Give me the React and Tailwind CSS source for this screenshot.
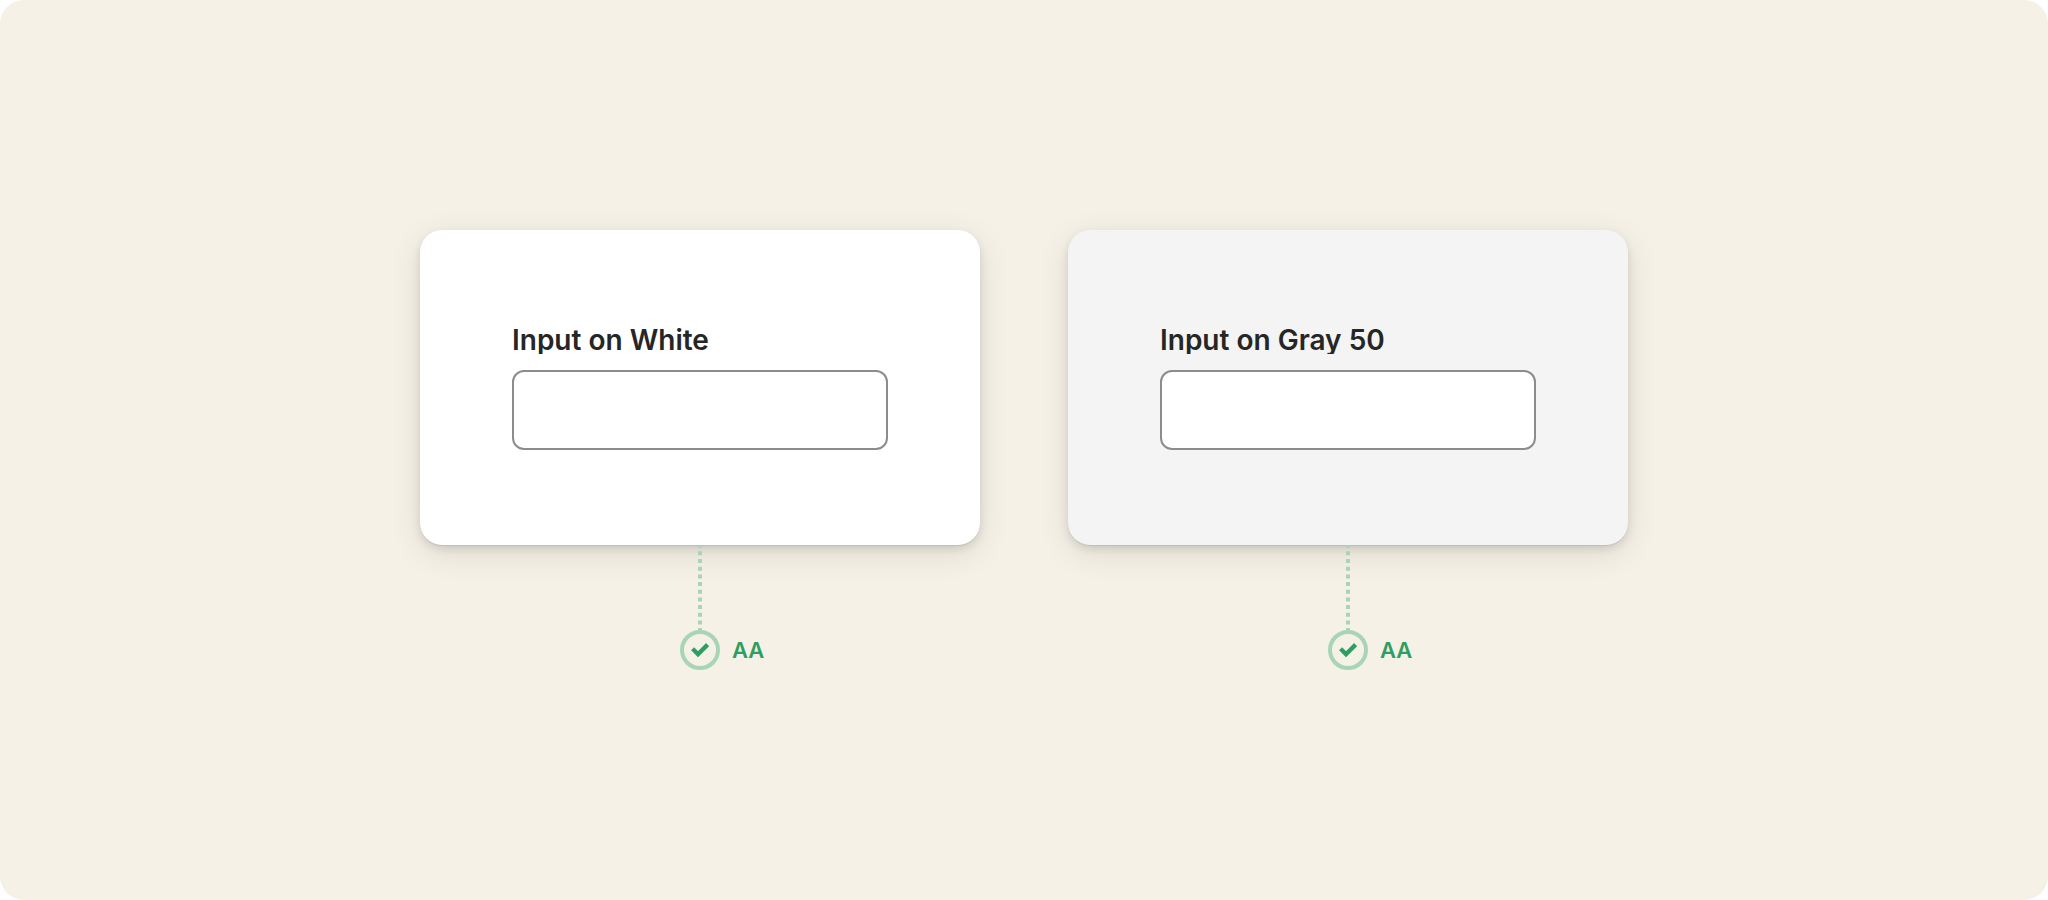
import { useId } from 'react'

const samples = [
  { label: 'Input on White', surface: 'bg-white', rating: 'AA' },
  { label: 'Input on Gray 50', surface: 'bg-[#f4f4f4]', rating: 'AA' },
]

function Connector() {
  return (
    <svg className="block" width="4" height="85" viewBox="0 0 4 85" aria-hidden="true">
      <path d="M2 -1.3V85" stroke="#a8d5b5" strokeWidth="4" strokeDasharray="4 3.67" />
    </svg>
  )
}

function PassIcon() {
  return (
    <svg width="40" height="40" viewBox="0 0 40 40" fill="none" aria-hidden="true">
      <circle cx="20" cy="20" r="18" stroke="#a8d5b5" strokeWidth="4" />
      <path d="M12.6 18.8L18 24.2L27.6 14.6" stroke="#2f9e62" strokeWidth="4.4" />
    </svg>
  )
}

function ContrastSample({ label, surface, rating }) {
  const id = useId()

  return (
    <div className="flex flex-col items-center">
      {/* Surface card */}
      <div
        className={`w-full rounded-[22px] px-[92px] pt-24 pb-[95px] shadow-[0_1px_1px_rgba(0,0,0,0.08),0_4px_8px_rgba(0,0,0,0.10),0_8px_32px_rgba(0,0,0,0.10)] ${surface}`}
      >
        <label
          htmlFor={id}
          className="block overflow-hidden text-[28px] leading-7 font-semibold text-[#262626]"
        >
          {label}
        </label>
        <input
          id={id}
          type="text"
          className="mt-4 block h-20 w-full rounded-xl border-2 border-[#8c8c8c] bg-white px-4 text-2xl text-[#262626] outline-none"
        />
      </div>

      {/* Rating */}
      <Connector />
      <div className="grid w-full grid-cols-[1fr_40px_1fr] items-center gap-3">
        <span />
        <PassIcon />
        <span className="text-[22px] leading-7 font-semibold text-[#2f9e62]">{rating}</span>
      </div>
    </div>
  )
}

export default function App() {
  return (
    <div className="bg-white font-['Inter',sans-serif]">
      <main className="flex min-h-screen items-center justify-center rounded-3xl bg-[#f5f1e6] px-8">
        <div className="grid w-full max-w-[1208px] grid-cols-2 gap-[88px]">
          {samples.map((sample) => (
            <ContrastSample key={sample.label} {...sample} />
          ))}
        </div>
      </main>
    </div>
  )
}
